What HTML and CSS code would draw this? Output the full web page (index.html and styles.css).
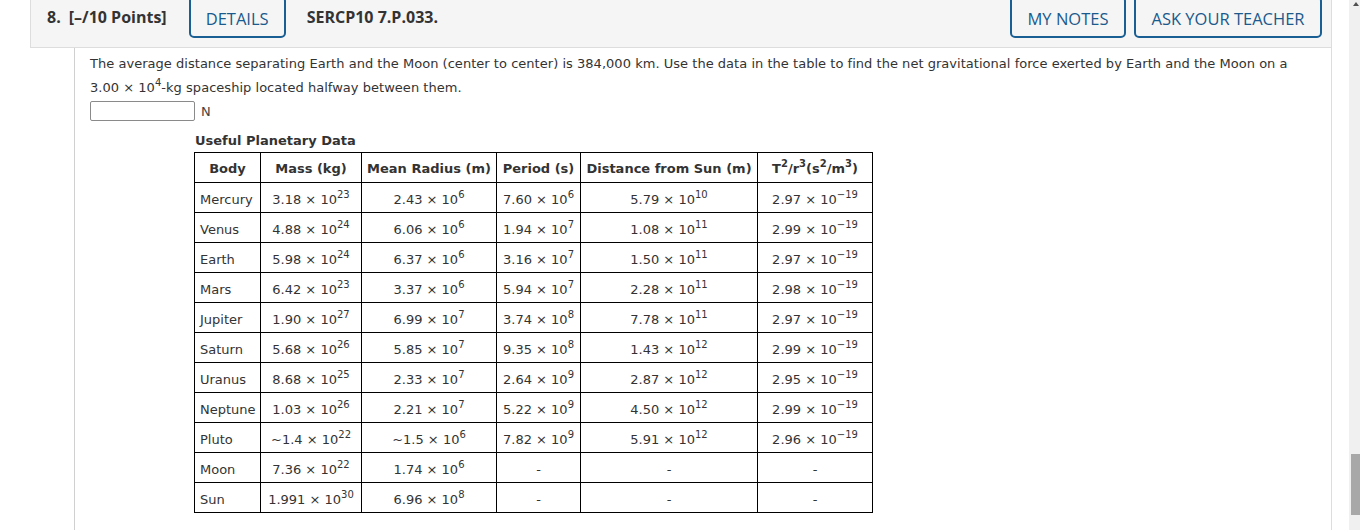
FILE: index.html
```html
<!DOCTYPE html>
<html>
<head>
<meta charset="utf-8">
<link rel="stylesheet" href="styles.css">
</head>
<body>
<div class="question">
  <div class="qhead">
    <span class="qnum">8.</span>
    <span class="qpts">[&ndash;/10 Points]</span>
    <button class="btn btn-details">DETAILS</button>
    <span class="qcode">SERCP10 7.P.033.</span>
    <span class="spacer"></span>
    <button class="btn btn-notes">MY NOTES</button>
    <button class="btn btn-ask">ASK YOUR TEACHER</button>
  </div>
  <div class="qbody">
    <p class="prompt">The average distance separating Earth and the Moon (center to center) is 384,000 km. Use the data in the table to find the net gravitational force exerted by Earth and the Moon on a 3.00 &times; 10<sup>4</sup>-kg spaceship located halfway between them.</p>
    <div class="answer"><span class="inputbox"></span><span class="unit">N</span></div>
    <div class="datablock">
      <div class="caption">Useful Planetary Data</div>
      <table class="data">
        <thead>
          <tr><th class="c1">Body</th><th class="c2">Mass (kg)</th><th class="c3">Mean Radius (m)</th><th class="c4">Period (s)</th><th class="c5">Distance from Sun (m)</th><th class="c6">T<sup>2</sup>/r<sup>3</sup>(s<sup>2</sup>/m<sup>3</sup>)</th></tr>
        </thead>
        <tbody>
          <tr><td>Mercury</td><td>3.18 &times; 10<sup>23</sup></td><td>2.43 &times; 10<sup>6</sup></td><td>7.60 &times; 10<sup>6</sup></td><td>5.79 &times; 10<sup>10</sup></td><td>2.97 &times; 10<sup>&minus;19</sup></td></tr>
          <tr><td>Venus</td><td>4.88 &times; 10<sup>24</sup></td><td>6.06 &times; 10<sup>6</sup></td><td>1.94 &times; 10<sup>7</sup></td><td>1.08 &times; 10<sup>11</sup></td><td>2.99 &times; 10<sup>&minus;19</sup></td></tr>
          <tr><td>Earth</td><td>5.98 &times; 10<sup>24</sup></td><td>6.37 &times; 10<sup>6</sup></td><td>3.16 &times; 10<sup>7</sup></td><td>1.50 &times; 10<sup>11</sup></td><td>2.97 &times; 10<sup>&minus;19</sup></td></tr>
          <tr><td>Mars</td><td>6.42 &times; 10<sup>23</sup></td><td>3.37 &times; 10<sup>6</sup></td><td>5.94 &times; 10<sup>7</sup></td><td>2.28 &times; 10<sup>11</sup></td><td>2.98 &times; 10<sup>&minus;19</sup></td></tr>
          <tr><td>Jupiter</td><td>1.90 &times; 10<sup>27</sup></td><td>6.99 &times; 10<sup>7</sup></td><td>3.74 &times; 10<sup>8</sup></td><td>7.78 &times; 10<sup>11</sup></td><td>2.97 &times; 10<sup>&minus;19</sup></td></tr>
          <tr><td>Saturn</td><td>5.68 &times; 10<sup>26</sup></td><td>5.85 &times; 10<sup>7</sup></td><td>9.35 &times; 10<sup>8</sup></td><td>1.43 &times; 10<sup>12</sup></td><td>2.99 &times; 10<sup>&minus;19</sup></td></tr>
          <tr><td>Uranus</td><td>8.68 &times; 10<sup>25</sup></td><td>2.33 &times; 10<sup>7</sup></td><td>2.64 &times; 10<sup>9</sup></td><td>2.87 &times; 10<sup>12</sup></td><td>2.95 &times; 10<sup>&minus;19</sup></td></tr>
          <tr><td>Neptune</td><td>1.03 &times; 10<sup>26</sup></td><td>2.21 &times; 10<sup>7</sup></td><td>5.22 &times; 10<sup>9</sup></td><td>4.50 &times; 10<sup>12</sup></td><td>2.99 &times; 10<sup>&minus;19</sup></td></tr>
          <tr><td>Pluto</td><td>~1.4 &times; 10<sup>22</sup></td><td>~1.5 &times; 10<sup>6</sup></td><td>7.82 &times; 10<sup>9</sup></td><td>5.91 &times; 10<sup>12</sup></td><td>2.96 &times; 10<sup>&minus;19</sup></td></tr>
          <tr><td>Moon</td><td>7.36 &times; 10<sup>22</sup></td><td>1.74 &times; 10<sup>6</sup></td><td>-</td><td>-</td><td>-</td></tr>
          <tr><td>Sun</td><td>1.991 &times; 10<sup>30</sup></td><td>6.96 &times; 10<sup>8</sup></td><td>-</td><td>-</td><td>-</td></tr>
        </tbody>
      </table>
    </div>
  </div>
</div>
<div class="scrollbar"><span class="arrow"></span><span class="thumb"></span></div>
</body>
</html>
```
FILE: styles.css
```css
html, body {
  margin: 0;
  padding: 0;
  background: #fff;
  overflow: hidden;
}
body {
  height: 530px;
  font-family: "DejaVu Sans", Verdana, sans-serif;
  color: #333;
}
.question {
  margin-left: 30px;
  width: 1302px;
  height: 530px;
  border-right: 1px solid #ddd;
  box-sizing: border-box;
  display: flex;
  flex-direction: column;
}
.qhead {
  height: 48px;
  box-sizing: border-box;
  background: #f5f5f5;
  border-left: 1px solid #ddd;
  border-bottom: 1px solid #ddd;
  display: flex;
  align-items: flex-start;
  font-family: "Open Sans", sans-serif;
  color: #333;
}
.qnum {
  margin: 5px 0 0 16px;
  font-size: 16px;
  font-weight: 700;
  line-height: 24px;
}
.qpts {
  margin: 5px 0 0 8px;
  font-size: 16px;
  font-weight: 700;
  line-height: 24px;
}
.qcode {
  margin: 5px 0 0 21px;
  font-size: 16px;
  font-weight: 700;
  line-height: 24px;
}
.spacer { flex: 1; }
.btn {
  margin-top: -4px;
  height: 42px;
  padding: 3px 0 0;
  box-sizing: border-box;
  background: transparent;
  border: 2px solid #1a5f94;
  border-radius: 5px;
  color: #1a5a8c;
  font-family: "Open Sans", sans-serif;
  font-size: 16.5px;
  font-weight: 500;
  line-height: 20px;
  text-align: center;
}
.btn-details {
  margin-left: 22px;
  width: 97px;
}
.btn-notes {
  width: 116px;
}
.btn-ask {
  margin-left: 8px;
  margin-right: 9px;
  width: 188px;
}
.qbody {
  flex: 1;
  margin-left: 44px;
  border-left: 1px solid #d0d0d0;
  padding-left: 15px;
  padding-right: 30px;
}
.prompt {
  margin: 4px 0 0;
  font-size: 13px;
  line-height: 24px;
  letter-spacing: 0.03px;
}
.prompt sup, .data sup {
  font-size: 10px;
  line-height: 0;
  vertical-align: 0.6em;
}
.answer {
  display: flex;
  align-items: center;
  height: 22px;
}
.inputbox {
  display: block;
  width: 103px;
  height: 18px;
  border: 1px solid #8a8a8a;
  border-radius: 2px;
  background: #fff;
}
.unit {
  margin-left: 6px;
  font-size: 13px;
  color: #444;
}
.datablock {
  margin-left: 104px;
  margin-top: 9px;
}
.caption {
  font-size: 13px;
  font-weight: 700;
  line-height: 20px;
  padding-left: 1px;
  margin-bottom: 1px;
}
.data {
  border-collapse: collapse;
  font-size: 13px;
  color: #333;
}
.data th, .data td {
  border: 1px solid #000;
  height: 30px;
  padding: 0 4px;
  text-align: center;
  box-sizing: border-box;
}
.data th {
  font-weight: 700;
  padding-top: 1px;
}
.data td {
  padding-top: 3px;
}
.data td:first-child {
  text-align: left;
  padding-left: 5px;
}
.c1 { width: 66px; }
.c2 { width: 101px; }
.c3 { width: 135px; }
.c4 { width: 84px; }
.c5 { width: 177px; }
.c6 { width: 115px; }
.scrollbar {
  position: fixed;
  right: 0;
  top: 0;
  width: 11px;
  height: 530px;
  background: #f0f0f0;
}
.arrow {
  position: absolute;
  left: 4px;
  top: 2px;
  width: 0;
  height: 0;
  border-left: 3px solid transparent;
  border-right: 3px solid transparent;
  border-bottom: 4px solid #505050;
}
.thumb {
  position: absolute;
  left: 2px;
  top: 454px;
  width: 9px;
  height: 61px;
  background: #a8a8a8;
}
```
